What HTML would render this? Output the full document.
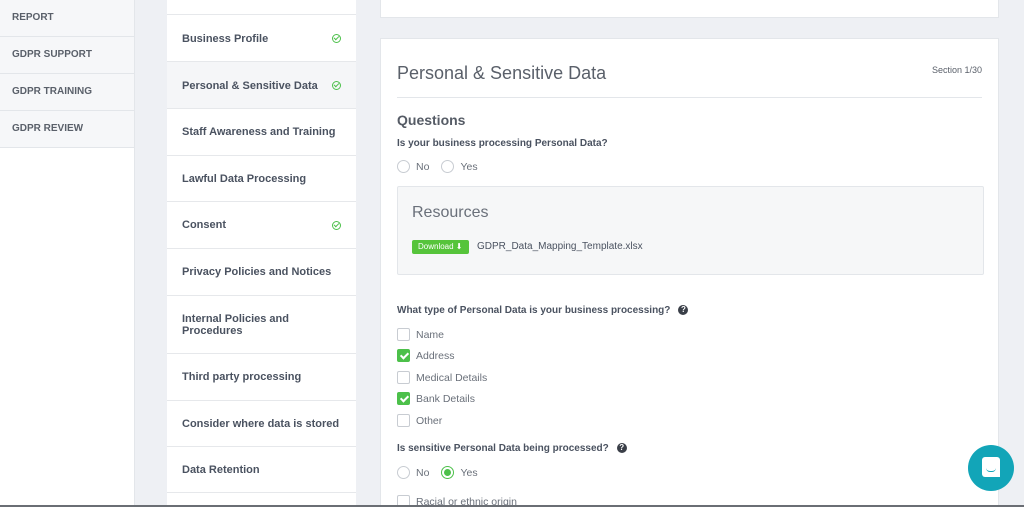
<!DOCTYPE html><html><head><style>
*{box-sizing:border-box;margin:0;padding:0}
html{width:1024px;height:507px;overflow:hidden}
body{width:1024px;height:507px;overflow:hidden;background:#eef0f4;font-family:"Liberation Sans",sans-serif;position:relative;color:#4a5260}
.side{position:absolute;left:0;top:0;width:135px;height:507px;background:#fff;border-right:1px solid #e3e6ea}
.side div{height:37px;background:#f6f7f9;border-bottom:1px solid #e3e6ea;font-size:10px;font-weight:bold;color:#5a606a;padding-left:12px;line-height:36px}
.nav{position:absolute;left:167px;top:0;width:189px;height:507px;overflow:hidden}
.nav div{position:absolute;left:0;width:189px;border-top:1px solid #e6e8eb;font-size:11px;font-weight:bold;color:#4a5260;padding:0 15px;display:flex;align-items:center;background:#fff}
.nav div.a{background:#f5f6f8}
.ok{position:absolute;right:15px;width:9px;height:9px;border:1.5px solid #4cc04a;border-radius:50%}
.ok:after{content:"";position:absolute;left:2px;top:0px;width:2px;height:4px;border:solid #4cc04a;border-width:0 1.3px 1.3px 0;transform:rotate(45deg)}
.card{position:absolute;left:380px;background:#fff;border:1px solid #e3e6ea;width:619px}
.q{font-size:10px;font-weight:bold;color:#4a5260;position:absolute;left:16px}
.opt{position:absolute;left:16px;font-size:10.5px;color:#6a707a;display:flex;align-items:center}
.r{width:13px;height:13px;border:1px solid #c8ccd2;border-radius:50%;margin-right:6px;position:relative}
.r.on{border-color:#4cc04a}.r.on:after{content:"";position:absolute;left:2px;top:2px;width:7px;height:7px;border-radius:50%;background:#4cc04a}
.c{width:13px;height:13px;border:1px solid #c8ccd2;border-radius:2px;margin-right:6px;position:relative}
.c.on{background:#4cc04a;border-color:#4cc04a}
.c.on:after{content:"";position:absolute;left:4px;top:1px;width:3px;height:6px;border:solid #fff;border-width:0 2px 2px 0;transform:rotate(45deg)}
.help{display:inline-block;width:10px;height:10px;border-radius:50%;background:#3a3f48;color:#fff;font-size:8px;text-align:center;line-height:10px;margin-left:8px;vertical-align:1px}
</style></head><body>
<div class="side"><div>REPORT</div><div>GDPR SUPPORT</div><div>GDPR TRAINING</div><div>GDPR REVIEW</div></div>
<div class="nav">
<div style="top:0;height:14px;border:none"></div>
<div style="top:14px;height:48px;border-top:1px solid #e6e8eb">Business Profile<span class="ok"></span></div>
<div class="a" style="top:61px;height:48px">Personal &amp; Sensitive Data<span class="ok"></span></div>
<div style="top:108px;height:47px">Staff Awareness and Training</div>
<div style="top:155px;height:47px">Lawful Data Processing</div>
<div style="top:201px;height:47px">Consent<span class="ok"></span></div>
<div style="top:248px;height:47px">Privacy Policies and Notices</div>
<div style="top:295px;height:58px">Internal Policies and<br>Procedures</div>
<div style="top:353px;height:47px">Third party processing</div>
<div style="top:400px;height:47px">Consider where data is stored</div>
<div style="top:446px;height:47px">Data Retention</div>
<div style="top:492px;height:20px"></div>
</div>
<div class="card" style="top:-2px;height:20px"></div>
<div class="card" style="top:38px;height:480px">
<div style="position:absolute;left:16px;top:24px;font-size:18px;color:#5a606a">Personal &amp; Sensitive Data</div>
<div style="position:absolute;right:16px;top:26px;font-size:9px;color:#5a606a">Section 1/30</div>
<div style="position:absolute;left:16px;right:16px;top:58px;border-top:1px solid #e3e6ea"></div>
<div style="position:absolute;left:16px;top:73px;font-size:14px;font-weight:bold;color:#555b65">Questions</div>
<div class="q" style="top:99px">Is your business processing Personal Data?</div>
<div class="opt" style="top:121px"><span class="r"></span>No<span class="r" style="margin-left:12px"></span>Yes</div>
<div style="position:absolute;left:16px;top:147px;width:587px;height:89px;background:#f6f7f8;border:1px solid #e3e6ea;border-radius:2px">
<div style="position:absolute;left:14px;top:17px;font-size:16px;color:#6a707a">Resources</div>
<div style="position:absolute;left:14px;top:53px;background:#56c43b;color:#fff;font-size:8px;padding:0 6px;height:14px;line-height:14px;border-radius:2px">Download ⬇</div>
<div style="position:absolute;left:79px;top:54px;font-size:10px;color:#4a5260">GDPR_Data_Mapping_Template.xlsx</div>
</div>
<div class="q" style="top:266px">What type of Personal Data is your business processing?<span class="help">?</span></div>
<div class="opt" style="top:289px"><span class="c"></span>Name</div>
<div class="opt" style="top:310px"><span class="c on"></span>Address</div>
<div class="opt" style="top:332px"><span class="c"></span>Medical Details</div>
<div class="opt" style="top:353px"><span class="c on"></span>Bank Details</div>
<div class="opt" style="top:375px"><span class="c"></span>Other</div>
<div class="q" style="top:404px">Is sensitive Personal Data being processed?<span class="help">?</span></div>
<div class="opt" style="top:427px"><span class="r"></span>No<span class="r on" style="margin-left:12px"></span>Yes</div>
<div class="opt" style="top:456px"><span class="c"></span>Racial or ethnic origin</div>
</div>
<div style="position:absolute;left:968px;top:445px;width:46px;height:46px;border-radius:50%;background:#12a5b8">
<div style="position:absolute;left:14px;top:12px;width:18px;height:20px;background:#fff;border-radius:3px 3px 0 3px"></div>
<div style="position:absolute;left:18px;top:23px;width:10px;height:4px;border-bottom:1.5px solid #12a5b8;border-radius:0 0 6px 6px"></div>
</div>
<div style="position:absolute;left:0;top:505px;width:1024px;height:2px;background:#6a6e74"></div>
</body></html>
